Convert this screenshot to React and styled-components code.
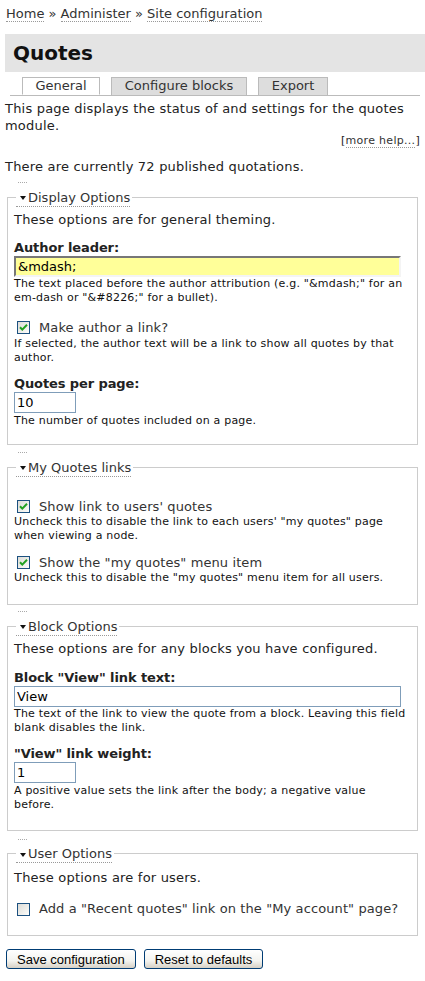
import React from "react";
import styled, { createGlobalStyle } from "styled-components";

const GlobalStyle = createGlobalStyle`
  body {
    margin: 0;
    background: #fff;
    font-family: "DejaVu Sans", Verdana, sans-serif;
    color: #222;
  }
`;

const Page = styled.div`
  width: 425px;
  padding: 0 5px 0 5px;
  box-sizing: border-box;
`;

const Breadcrumb = styled.div`
  font-size: 13px;
  line-height: 17px;
  padding: 5px 1px 0;
  height: 34px;
  box-sizing: border-box;
  color: #333;
`;

const Crumb = styled.a`
  color: #333;
  text-decoration: none;
  border-bottom: 1px dotted #999;
`;

const TitleBar = styled.h1`
  margin: 0 -5px 0 0;
  height: 38px;
  background: #e4e4e4;
  display: flex;
  align-items: center;
  padding: 0 8px;
  font-size: 20px;
  font-weight: bold;
  color: #111;
`;

const Tabs = styled.ul`
  list-style: none;
  margin: 5px 0 0 5px;
  padding: 0 0 0 12px;
  display: flex;
  gap: 11px;
  height: 18px;
  border-bottom: 1px solid #bbb;
`;

const Tab = styled.li`
  height: 18px;
  box-sizing: border-box;
  border: 1px solid #bbb;
  border-bottom: ${(p) => (p.$active ? "1px solid #fff" : "none")};
  background: ${(p) => (p.$active ? "#fff" : "#ddd")};
  width: ${(p) => p.$w}px;
  text-align: center;
  font-size: 13px;
  line-height: 16px;
  color: #333;
`;

const Text = styled.p`
  margin: ${(p) => p.$top || 0}px 0 0;
  font-size: 13px;
  line-height: 17px;
  letter-spacing: 0.2px;
  color: #222;
`;

const Intro = styled(Text)`
  margin-top: 4px;
`;

const MoreHelp = styled.div`
  text-align: right;
  font-size: 11px;
  line-height: 13px;
  letter-spacing: 0.3px;
  margin-top: 0;
  color: #222;

  a {
    color: #333;
    text-decoration: none;
    border-bottom: 1px dotted #999;
  }
`;

const Count = styled(Text)`
  margin-top: 11px;
`;

const Fieldset = styled.fieldset`
  margin: ${(p) => p.$top}px 2px 0 2px;
  padding: 4px 6px ${(p) => p.$bottom}px 6px;
  border: 1px solid #ccc;
  box-sizing: border-box;
`;

const Legend = styled.legend`
  padding: 0 2px 0 0;
  margin-left: 2px;
  font-size: 13px;
  line-height: 16px;
  color: #333;
  position: relative;
`;

const LegendLink = styled.a`
  display: inline-flex;
  align-items: center;
  border-bottom: 1px dotted #999;
  padding-left: 4px;
  color: #333;
  text-decoration: none;

  &::before {
    content: "";
    position: absolute;
    left: 2px;
    top: -6px;
    width: 9px;
    border-top: 1px dotted #aaa;
  }
`;

const Arrow = styled.span`
  display: inline-block;
  width: 0;
  height: 0;
  border-left: 3.5px solid transparent;
  border-right: 3.5px solid transparent;
  border-top: 4px solid #111;
  margin-right: 2px;
  margin-top: 1px;
`;

const Label = styled.div`
  font-size: 13px;
  font-weight: bold;
  line-height: 16px;
  letter-spacing: -0.1px;
  color: #222;
  margin-top: ${(p) => p.$top || 0}px;
`;

const TextInput = styled.input`
  display: block;
  box-sizing: border-box;
  width: ${(p) => p.$w}px;
  height: 21px;
  margin: 0;
  padding: 0 2px;
  font-family: "DejaVu Sans", Verdana, sans-serif;
  font-size: 13px;
  color: #000;
  outline: none;
  background: ${(p) => (p.$focus ? "#ffff99" : "#fff")};
  border: ${(p) => (p.$focus ? "2px solid #777" : "1px solid #7f9db9")};
  ${(p) =>
    p.$focus &&
    "border-right: 2px solid #f4f4f4; border-bottom: 2px solid #f4f4f4;"}
`;

const Description = styled.div`
  max-width: 392px;
  font-size: 11px;
  line-height: 14.5px;
  letter-spacing: 0.2px;
  color: #111;
  margin-top: ${(p) => p.$top ?? 0}px;
`;

const CheckRow = styled.label`
  display: flex;
  align-items: center;
  gap: 9px;
  padding-left: 3px;
  margin-top: ${(p) => p.$top || 0}px;
  font-size: 13px;
  line-height: 16px;
  letter-spacing: 0.1px;
  color: #333;
`;

const Box = styled.span`
  width: 13px;
  height: 13px;
  box-sizing: border-box;
  border: 1px solid #1c5180;
  background: linear-gradient(135deg, #dcdcd7 0%, #f6f6f3 80%, #fff 100%);
  display: flex;
  align-items: center;
  justify-content: center;
  flex-shrink: 0;
`;

const Buttons = styled.div`
  display: flex;
  gap: 8px;
  margin-top: 13px;
  padding-left: 1px;
`;

const Button = styled.button`
  height: 20px;
  padding: 0 10px;
  font-family: "Liberation Sans", Arial, sans-serif;
  font-size: 13px;
  color: #000;
  border: 1px solid #003c74;
  border-radius: 3px;
  background: linear-gradient(#ffffff 0%, #f3f3ef 60%, #d6d0c5 100%);
`;

function Checkbox({ checked }) {
  return (
    <Box>
      {checked && (
        <svg width="9" height="9" viewBox="0 0 9 9">
          <path
            d="M1 4.2 L3.3 6.6 L8 1.8"
            fill="none"
            stroke="#21a121"
            strokeWidth="2"
          />
        </svg>
      )}
    </Box>
  );
}

function Legendary({ children }) {
  return (
    <Legend>
      <LegendLink>
        <Arrow />
        {children}
      </LegendLink>
    </Legend>
  );
}

export default function App() {
  return (
    <Page>
      <GlobalStyle />
      <Breadcrumb>
        <Crumb>Home</Crumb> » <Crumb>Administer</Crumb> »{" "}
        <Crumb>Site configuration</Crumb>
      </Breadcrumb>
      <TitleBar>Quotes</TitleBar>
      <Tabs>
        <Tab $active $w={78}>General</Tab>
        <Tab $w={136}>Configure blocks</Tab>
        <Tab $w={70}>Export</Tab>
      </Tabs>
      <Intro>
        This page displays the status of and settings for the quotes module.
      </Intro>
      <MoreHelp>
        [<a>more help...</a>]
      </MoreHelp>
      <Count>There are currently 72 published quotations.</Count>

      <Fieldset $top={13} $bottom={16}>
        <Legendary>Display Options</Legendary>
        <Text>These options are for general theming.</Text>
        <Label $top={12}>Author leader:</Label>
        <TextInput $w={387} $focus defaultValue={"&mdash;"} />
        <Description $top={0}>
          The text placed before the author attribution (e.g. "&amp;mdash;"
          for an em-dash or "&amp;#8226;" for a bullet).
        </Description>
        <CheckRow $top={14}>
          <Checkbox checked />
          Make author a link?
        </CheckRow>
        <Description $top={1}>
          If selected, the author text will be a link to show all quotes by
          that author.
        </Description>
        <Label $top={10}>Quotes per page:</Label>
        <TextInput $w={62} defaultValue="10" />
        <Description $top={1}>
          The number of quotes included on a page.
        </Description>
      </Fieldset>

      <Fieldset $top={13} $bottom={19}>
        <Legendary>My Quotes links</Legendary>
        <CheckRow $top={18}>
          <Checkbox checked />
          Show link to users' quotes
        </CheckRow>
        <Description $top={0}>
          Uncheck this to disable the link to each users' "my quotes" page
          when viewing a node.
        </Description>
        <CheckRow $top={11}>
          <Checkbox checked />
          Show the "my quotes" menu item
        </CheckRow>
        <Description $top={0}>
          Uncheck this to disable the "my quotes" menu item for all users.
        </Description>
      </Fieldset>

      <Fieldset $top={12} $bottom={17}>
        <Legendary>Block Options</Legendary>
        <Text>These options are for any blocks you have configured.</Text>
        <Label $top={13}>Block "View" link text:</Label>
        <TextInput $w={387} defaultValue="View" />
        <Description $top={0}>
          The text of the link to view the quote from a block. Leaving this
          field blank disables the link.
        </Description>
        <Label $top={10}>"View" link weight:</Label>
        <TextInput $w={62} defaultValue="1" />
        <Description $top={1}>
          A positive value sets the link after the body; a negative value
          before.
        </Description>
      </Fieldset>

      <Fieldset $top={14} $bottom={18}>
        <Legendary>User Options</Legendary>
        <Text $top={2}>These options are for users.</Text>
        <CheckRow $top={15}>
          <Checkbox />
          Add a "Recent quotes" link on the "My account" page?
        </CheckRow>
      </Fieldset>

      <Buttons>
        <Button>Save configuration</Button>
        <Button>Reset to defaults</Button>
      </Buttons>
    </Page>
  );
}
